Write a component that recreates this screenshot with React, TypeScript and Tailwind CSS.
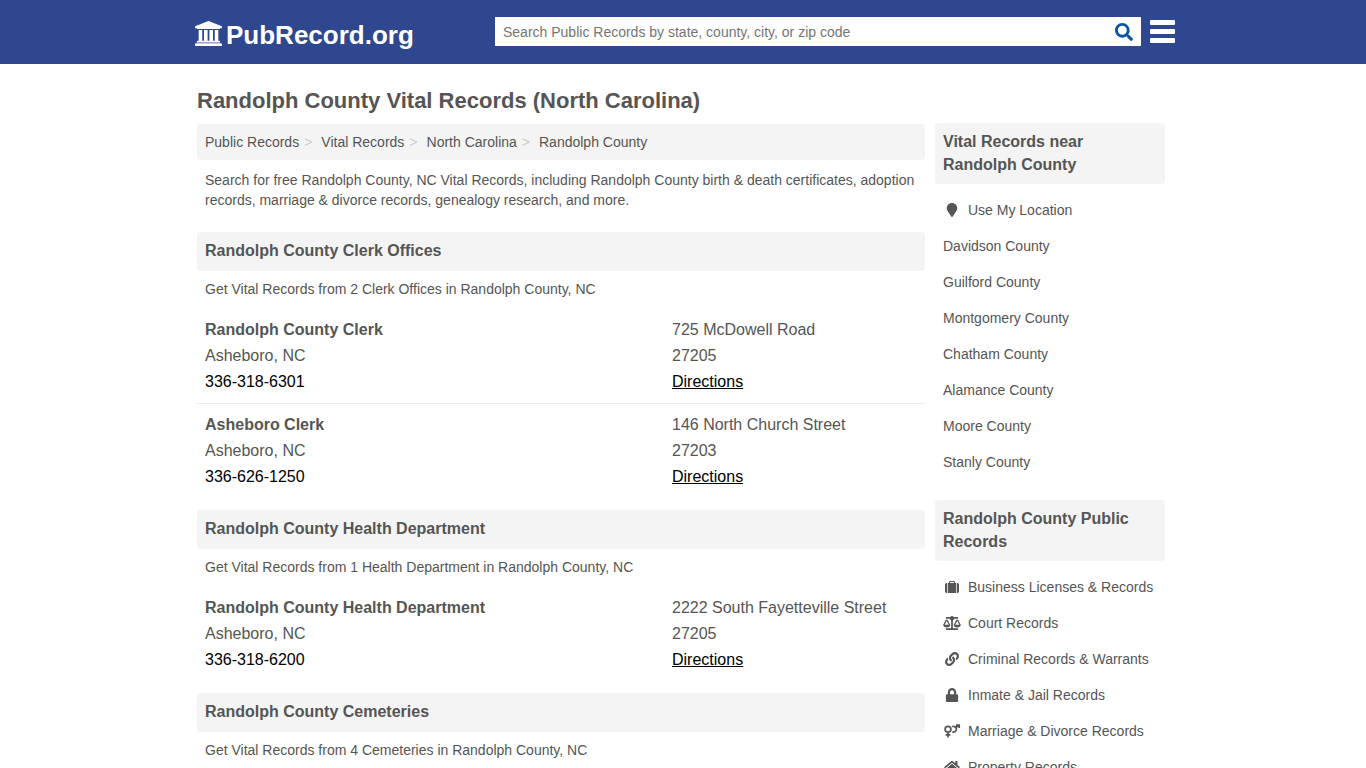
import type { ComponentType, SVGProps } from "react";
import { FaBalanceScale, FaHome, FaLink, FaLock, FaMapMarker, FaSearch } from "react-icons/fa";

interface Office {
    name: string;
    city: string;
    phone: string;
    street: string;
    zip: string;
}

interface Section {
    title: string;
    summary: string;
    offices: Office[];
}

interface SideItem {
    label: string;
    icon?: ComponentType<{ className?: string }>;
}

function BankIcon(props: SVGProps<SVGSVGElement>) {
    return (
        <svg viewBox="0 0 1920 1792" fill="currentColor" aria-hidden="true" {...props}>
            <path d="M960 0l960 384v128h-128q0 26-20.5 45t-48.5 19h-1526q-28 0-48.5-19t-20.5-45h-128v-128z" />
            <path d="M256 640h256v768h128v-768h256v768h128v-768h256v768h128v-768h256v768h59q28 0 48.5 19t20.5 45v64h-1664v-64q0-26 20.5-45t48.5-19h59z" />
            <path d="M1851 1600q28 0 48.5 19t20.5 45v128h-1920v-128q0-26 20.5-45t48.5-19z" />
        </svg>
    );
}

function SuitcaseIcon({ className }: { className?: string }) {
    return (
        <svg viewBox="0 0 1792 1792" fill="currentColor" aria-hidden="true" className={className}>
            <path fillRule="evenodd" d="M640 384h512v-128h-512zM1408 384v1280h-1024v-1280h128v-160q0-40 28-68t68-28h576q40 0 68 28t28 68v160z" />
            <path d="M288 384v1280h-64q-92 0-158-66t-66-158v-832q0-92 66-158t158-66z" />
            <path d="M1792 608v832q0 92-66 158t-158 66h-64v-1280h64q92 0 158 66t66 158z" />
        </svg>
    );
}

function VenusMarsIcon({ className }: { className?: string }) {
    return (
        <svg viewBox="0 0 18 14" fill="none" stroke="currentColor" strokeWidth="1.7" aria-hidden="true" className={className}>
            <circle cx="5" cy="5.2" r="2.9" />
            <path d="M5 8v5.4M2.6 10.8h4.8" />
            <path d="M9.3 2.7a2.8 2.8 0 1 1 0 5M13 3.6l2.8-2.5M13 1.1h3.2v3" />
        </svg>
    );
}

const breadcrumbs = ["Public Records", "Vital Records", "North Carolina", "Randolph County"];

const sections: Section[] = [
    {
        title: "Randolph County Clerk Offices",
        summary: "Get Vital Records from 2 Clerk Offices in Randolph County, NC",
        offices: [
            { name: "Randolph County Clerk", city: "Asheboro, NC", phone: "336-318-6301", street: "725 McDowell Road", zip: "27205" },
            { name: "Asheboro Clerk", city: "Asheboro, NC", phone: "336-626-1250", street: "146 North Church Street", zip: "27203" },
        ],
    },
    {
        title: "Randolph County Health Department",
        summary: "Get Vital Records from 1 Health Department in Randolph County, NC",
        offices: [
            { name: "Randolph County Health Department", city: "Asheboro, NC", phone: "336-318-6200", street: "2222 South Fayetteville Street", zip: "27205" },
        ],
    },
    {
        title: "Randolph County Cemeteries",
        summary: "Get Vital Records from 4 Cemeteries in Randolph County, NC",
        offices: [],
    },
];

const nearby: SideItem[] = [
    { label: "Use My Location", icon: FaMapMarker },
    { label: "Davidson County" },
    { label: "Guilford County" },
    { label: "Montgomery County" },
    { label: "Chatham County" },
    { label: "Alamance County" },
    { label: "Moore County" },
    { label: "Stanly County" },
];

const publicRecords: SideItem[] = [
    { label: "Business Licenses & Records", icon: SuitcaseIcon },
    { label: "Court Records", icon: FaBalanceScale },
    { label: "Criminal Records & Warrants", icon: FaLink },
    { label: "Inmate & Jail Records", icon: FaLock },
    { label: "Marriage & Divorce Records", icon: VenusMarsIcon },
    { label: "Property Records", icon: FaHome },
];

function Header() {
    return (
        <header className="bg-[#2e478f]">
            <div className="mx-auto flex h-16 max-w-[984px] items-center pb-px pl-1">
                <a href="#" className="flex w-[300px] shrink-0 items-center gap-1 pt-[7px] text-[26px] leading-8 font-bold text-white">
                    <BankIcon className="mb-1 h-[25px] w-[27px]" />
                    PubRecord.org
                </a>
                <form className="flex h-[29px] min-w-0 flex-1 bg-white" onSubmit={(e) => e.preventDefault()}>
                    <input
                        type="text"
                        aria-label="Search Public Records"
                        placeholder="Search Public Records by state, county, city, or zip code"
                        className="min-w-0 flex-1 px-2 pt-px text-sm text-[#555] outline-none placeholder:text-[#757575]"
                    />
                    <button type="submit" aria-label="Search" className="px-2 text-[#0b55a0]">
                        <FaSearch className="size-[18px]" />
                    </button>
                </form>
                <button type="button" aria-label="Menu" className="ml-[9px] flex w-[25px] flex-col gap-1 pb-px">
                    <span className="h-[5px] rounded-[1px] bg-white" />
                    <span className="h-[5px] rounded-[1px] bg-white" />
                    <span className="h-[5px] rounded-[1px] bg-white" />
                </button>
            </div>
        </header>
    );
}

function OfficeRow({ office }: { office: Office }) {
    return (
        <li className="flex border-b border-[#eee] px-2 py-2 leading-[26px] last:border-b-0">
            <div className="min-w-0 flex-1">
                <h3 className="font-bold"><a href="#">{office.name}</a></h3>
                <p>{office.city}</p>
                <a href="#" className="text-black">{office.phone}</a>
            </div>
            <div className="w-[245px] shrink-0">
                <p>{office.street}</p>
                <p>{office.zip}</p>
                <a href="#" className="text-black underline">Directions</a>
            </div>
        </li>
    );
}

function SideList({ title, items }: { title: string; items: SideItem[] }) {
    return (
        <section className="mb-5">
            <h2 className="mb-2 rounded-sm bg-[#f4f4f4] px-2 pt-[7px] pb-2 leading-[23px] font-bold">{title}</h2>
            <ul className="text-sm">
                {items.map(({ label, icon: Icon }) => (
                    <li key={label}>
                        <a href="#" className="flex h-9 items-center px-2">
                            {Icon && <Icon className="mr-[7px] h-[14px] w-[18px] shrink-0" />}
                            {label}
                        </a>
                    </li>
                ))}
            </ul>
        </section>
    );
}

export default function App() {
    return (
        <div className="h-screen overflow-y-auto bg-white font-['Liberation_Sans',Arial,sans-serif] text-[#555] [scrollbar-width:none]">
            <Header />
            <div className="mx-auto max-w-[972px] pt-[23px] pr-1">
                <h1 className="text-[22px] leading-7 font-bold">Randolph County Vital Records (North Carolina)</h1>
                <div className="flex gap-[10px] pt-2">
                    <main className="min-w-0 flex-1 pt-px">
                        <nav aria-label="Breadcrumb" className="rounded-sm bg-[#f4f4f4] px-2 py-2 text-sm">
                            <ol className="flex">
                                {breadcrumbs.map((crumb, i) => (
                                    <li key={crumb}>
                                        <a href="#">{crumb}</a>
                                        {i < breadcrumbs.length - 1 && <span className="mr-[9px] ml-[5px] text-[#ccc]">&gt;</span>}
                                    </li>
                                ))}
                            </ol>
                        </nav>
                        <p className="mb-[22px] px-2 pt-[10px] text-sm">
                            Search for free Randolph County, NC Vital Records, including Randolph County birth &amp; death certificates,
                            adoption records, marriage &amp; divorce records, genealogy research, and more.
                        </p>
                        {sections.map((section) => (
                            <section key={section.title} className="mb-3">
                                <h2 className="rounded-sm bg-[#f4f4f4] px-2 pt-[7px] pb-[9px] leading-[23px] font-bold">{section.title}</h2>
                                <p className="px-2 pt-2 pb-[10px] text-sm">{section.summary}</p>
                                <ul>
                                    {section.offices.map((office) => (
                                        <OfficeRow key={office.name} office={office} />
                                    ))}
                                </ul>
                            </section>
                        ))}
                    </main>
                    <aside className="w-[230px] shrink-0">
                        <SideList title="Vital Records near Randolph County" items={nearby} />
                        <SideList title="Randolph County Public Records" items={publicRecords} />
                    </aside>
                </div>
            </div>
        </div>
    );
}
